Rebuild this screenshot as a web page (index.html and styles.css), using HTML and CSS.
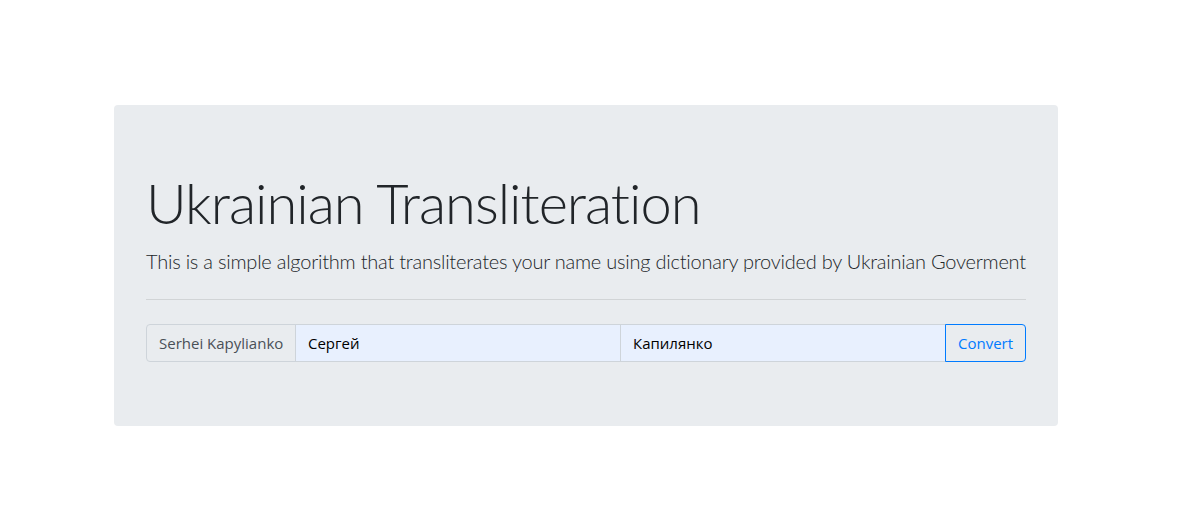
FILE: index.html
```html
<!DOCTYPE html>
<html lang="en">
<head>
<meta charset="utf-8">
<title>Ukrainian Transliteration</title>
<link rel="stylesheet" href="styles.css">
</head>
<body>
<div class="page">
  <div class="jumbotron">
    <h1 class="display">Ukrainian Transliteration</h1>
    <p class="lead">This is a simple algorithm that transliterates your name using dictionary provided by Ukrainian Goverment</p>
    <hr class="divider">
    <div class="input-group">
      <span class="prepend">Serhei Kapylianko</span>
      <input class="field" type="text" value="Сергей">
      <input class="field" type="text" value="Капилянко">
      <button class="btn-convert" type="button">Convert</button>
    </div>
  </div>
</div>
</body>
</html>
```
FILE: styles.css
```css
* { box-sizing: border-box; }
html, body { margin: 0; padding: 0; background: #fff; }
body {
  font-family: Lato, "Open Sans", Arial, sans-serif;
  color: #212529;
  font-size: 16px;
  line-height: 1.5;
}
.page {
  padding: 105px 0 0 114px;
}
.jumbotron {
  width: 944px;
  background: #e9ecef;
  border-radius: 4px;
  padding: 64px 32px;
}
.display {
  margin: 0 0 10px;
  font-size: 56px;
  font-weight: 300;
  line-height: 1.2;
  letter-spacing: -1px;
  color: #212529;
}
.lead {
  margin: 0;
  font-size: 20px;
  font-weight: 300;
  line-height: 30px;
  letter-spacing: -0.23px;
  color: #212529;
  white-space: nowrap;
}
.divider {
  margin: 23px 0 24px;
  border: 0;
  border-top: 1px solid rgba(0,0,0,0.1);
}
.input-group {
  display: flex;
  height: 38px;
}
.prepend {
  display: flex;
  align-items: center;
  width: 150px;
  padding: 0 12px;
  font-family: "Open Sans", Arial, sans-serif;
  font-size: 15px;
  color: #495057;
  background: #e9ecef;
  border: 1px solid #ced4da;
  border-radius: 4px 0 0 4px;
  white-space: nowrap;
}
.field {
  flex: 1;
  min-width: 0;
  height: 38px;
  margin-left: -1px;
  padding: 6px 12px;
  font-family: "Open Sans", Arial, sans-serif;
  font-size: 15px;
  color: #000;
  background: #e8f0fe;
  border: 1px solid #ced4da;
  outline: none;
}
.btn-convert {
  width: 81px;
  height: 38px;
  margin-left: -1px;
  padding: 0 12px;
  font-family: "Open Sans", Arial, sans-serif;
  font-size: 15px;
  color: #007bff;
  background: transparent;
  border: 1px solid #007bff;
  border-radius: 0 4px 4px 0;
  position: relative;
}
```
